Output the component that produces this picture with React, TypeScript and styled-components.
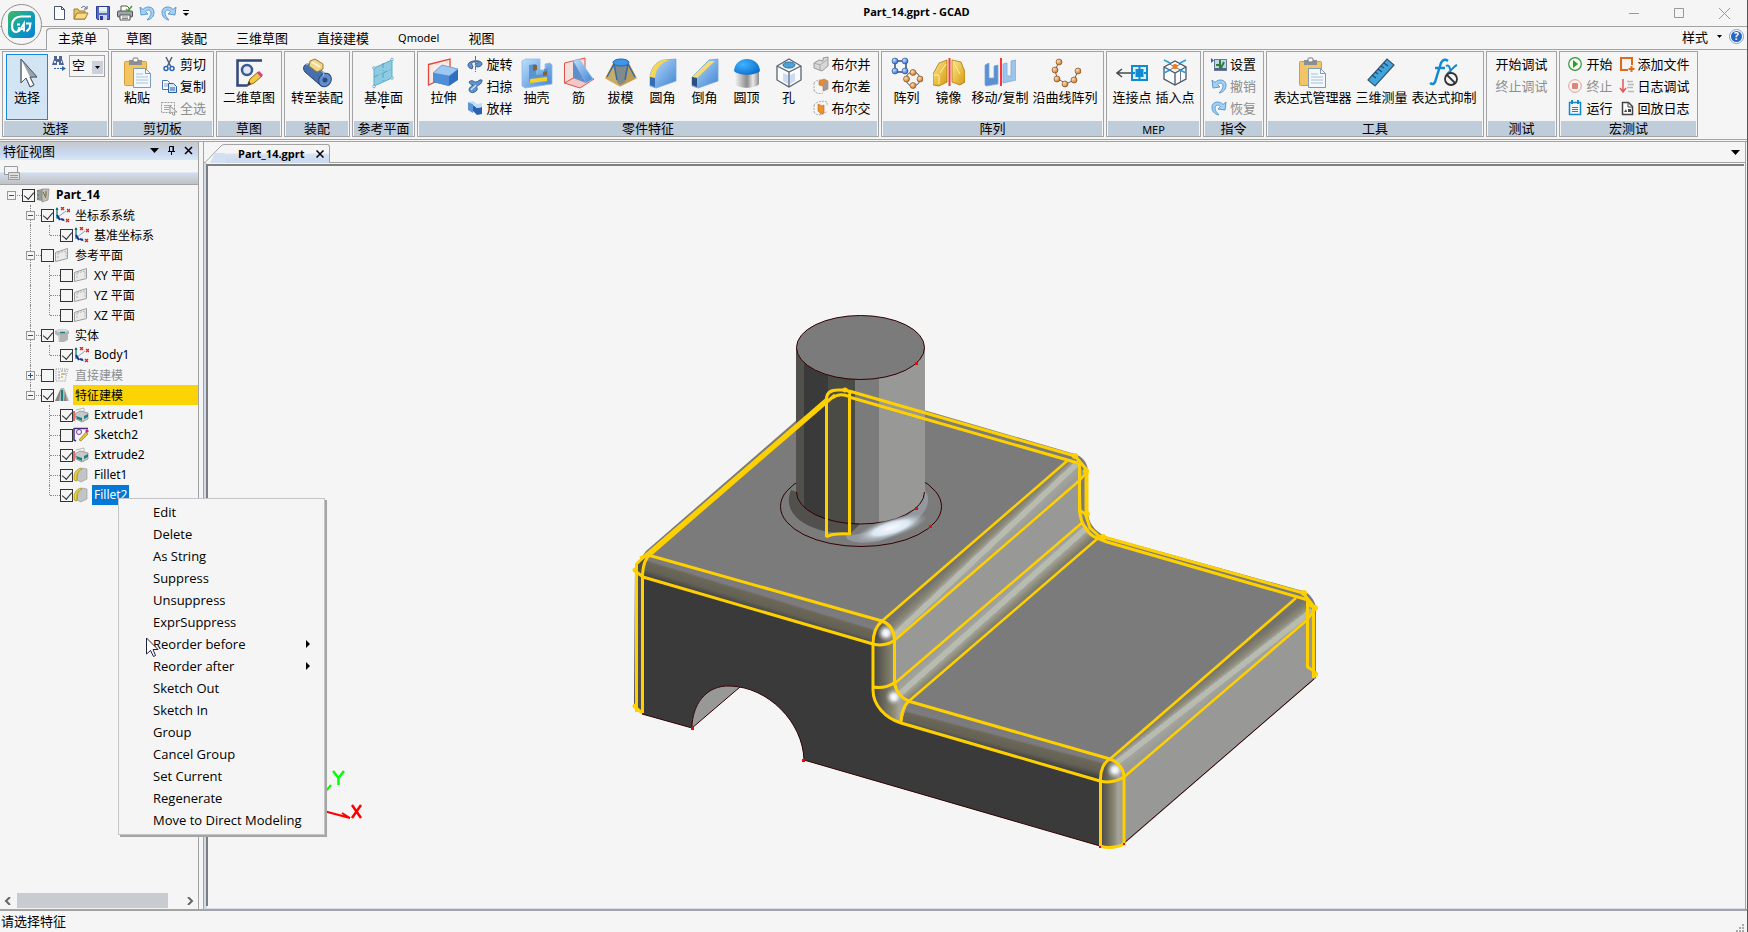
import React from "react";
import styled, { createGlobalStyle, css } from "styled-components";

const LINE = "#a3a3a3";
const BG = "#f5f5f5";
const BAND = "#bfccda";

const GlobalStyle = createGlobalStyle`
  * { box-sizing: border-box; }
  body {
    margin: 0;
    background: ${BG};
    color: #000;
    font-family: "Noto Sans", "Noto Sans CJK SC", sans-serif;
    font-size: 12px;
  }
  button, select, input { font: inherit; color: inherit; margin: 0; padding: 0; }
  button { background: none; border: 0; cursor: default; }
  ul { list-style: none; margin: 0; padding: 0; }
  h2 { font: inherit; margin: 0; }
`;

/* ---------- frame ---------- */

const Frame = styled.div`
  position: relative;
  display: flex;
  flex-direction: column;
  min-height: 100vh;
  border-right: 1px solid #555;
  overflow: hidden;
`;

const TitleBar = styled.header`
  display: grid;
  grid-template-columns: 1fr auto 1fr;
  align-items: center;
  height: 27px;
  border-bottom: 1px solid ${LINE};
`;

const QuickBar = styled.div`
  display: flex;
  align-items: center;
  gap: 6px;
  padding-left: 51px;
`;

const IconButton = styled.button`
  display: flex;
  align-items: center;
  justify-content: center;
`;

const WindowTitle = styled.div`
  font-family: "Open Sans", sans-serif;
  font-weight: 700;
  font-size: 11px;
  line-height: 24px;
  padding: 0 0 2px 86px;
`;

const WindowButtons = styled.div`
  display: flex;
  justify-content: flex-end;
  gap: 34px;
  padding-right: 17px;
  color: #999;
`;

const AppButton = styled.button`
  position: absolute;
  left: 1px;
  top: 4px;
  width: 41px;
  height: 41px;
  border: 1px solid #8f8f8f;
  border-radius: 50%;
  background: ${BG};
  display: flex;
  align-items: center;
  justify-content: center;
  z-index: 2;
`;

const TabRow = styled.nav`
  display: flex;
  align-items: flex-end;
  gap: 5px;
  height: 23px;
  padding: 0 3px 0 46px;
  border-bottom: 1px solid ${LINE};
`;

const RibbonTab = styled.button<{ $active?: boolean; $latin?: boolean }>`
  height: 21px;
  padding: 0 12px;
  font-size: ${(p) => (p.$latin ? 11 : 13)}px;
  line-height: ${(p) => (p.$latin ? 18 : 16)}px;
  padding-bottom: 2px;
  ${(p) =>
    p.$active &&
    css`
      border-radius: 4px 4px 0 0;
      background: ${BG};
      height: 22px;
      line-height: 18px;
      margin-bottom: -1px;
      box-shadow: inset 1px 1px ${LINE}, inset -1px 0 ${LINE};
    `}
`;

const StyleTools = styled.div`
  display: flex;
  align-items: center;
  gap: 7px;
  margin-left: auto;
  height: 22px;
  padding-bottom: 3px;
  font-size: 13px;
  line-height: 16px;
`;

const StyleButton = styled.button`
  display: flex;
  align-items: center;
  gap: 9px;
`;

/* ---------- ribbon ---------- */

const RibbonBar = styled.div`
  display: flex;
  gap: 2px;
  padding: 1px 2px 2px;
  height: 90px;
  border-bottom: 1px solid ${LINE};
`;

const Group = styled.section<{ $w: number }>`
  display: flex;
  flex-direction: column;
  flex: none;
  width: ${(p) => p.$w}px;
  border: 1px solid ${LINE};
  padding: 0 1px;
`;

const GroupBody = styled.div`
  flex: 1;
  display: flex;
  justify-content: center;
  padding-top: 2px;
`;

const GroupName = styled.h2<{ $latin?: boolean }>`
  height: 15px;
  background: ${BAND};
  text-align: center;
  font-size: ${(p) => (p.$latin ? 11 : 13)}px;
  line-height: ${(p) => (p.$latin ? 17 : 15)}px;
`;

const BigButton = styled.button<{ $on?: boolean }>`
  display: flex;
  flex-direction: column;
  align-items: center;
  min-width: 42px;
  height: 66px;
  padding: 2px ${(p) => (p.$on ? 1 : 2)}px 0;
  border: ${(p) => (p.$on ? "1px solid #1b86dc" : "0")};
  border-top-width: 1px;
  border-top-style: solid;
  border-top-color: ${(p) => (p.$on ? "#1b86dc" : "transparent")};
  background: ${(p) => (p.$on ? "#d3e5f5" : "none")};
  font-size: 13px;
  line-height: 17px;
  white-space: nowrap;
`;

const SmallColumn = styled.div`
  display: flex;
  flex-direction: column;
  padding: 0 3px;
`;

const SmallButton = styled.button`
  display: flex;
  align-items: center;
  gap: 3px;
  height: 22px;
  padding-bottom: 2px;
  font-size: 13px;
  line-height: 18px;
  white-space: nowrap;
  &:disabled { color: #8e8e8e; }
`;

const SelectTools = styled.div`
  display: flex;
  gap: 2px;
  padding: 1px 0 0 3px;
`;

const FilterBox = styled.div`
  position: relative;
  width: 36px;
  height: 22px;
`;

const FilterSelect = styled.select`
  appearance: none;
  width: 100%;
  height: 100%;
  border: 1px solid ${LINE};
  border-radius: 0;
  background: ${BG};
  padding: 0 2px 2px;
  font-size: 13px;
`;

const FilterArrow = styled.span`
  position: absolute;
  right: 2px;
  top: 6px;
  width: 11px;
  height: 13px;
  background: #cbd0da;
  display: flex;
  align-items: center;
  justify-content: center;
  pointer-events: none;
`;

/* ---------- workspace ---------- */

const Workspace = styled.div`
  display: flex;
  flex: 1;
  gap: 4px;
  margin-top: 1px;
  border-top: 1px solid ${LINE};
  border-bottom: 2px solid ${LINE};
`;

const Panel = styled.aside`
  display: flex;
  flex-direction: column;
  flex: none;
  width: 199px;
  border-right: 1px solid ${LINE};
`;

const PanelHeader = styled.div`
  display: flex;
  align-items: center;
  height: 18px;
  padding: 0 5px 1px 3px;
  background: linear-gradient(#c6c9cd, #c9d7ef 60%, #d8e7f6);
  font-size: 13px;
  line-height: 16px;
`;

const PanelTools = styled.div`
  display: flex;
  align-items: center;
  gap: 8px;
  margin-left: auto;
`;

const PanelToolbar = styled.div`
  height: 25px;
  padding: 6px 4px 0;
  border-bottom: 1px solid ${LINE};
  background: linear-gradient(${BG} 12px, #cfdef2 13px, #c9cbcf 20px, #b9c2d0);
`;

const Tree = styled.ul`
  flex: 1;
`;

const TreeRow = styled.li`
  display: flex;
  align-items: center;
  height: 20px;
  padding-left: 7px;
`;

const Indent = styled.span<{ $line?: boolean }>`
  flex: none;
  width: 15px;
  height: 20px;
  margin-left: 4px;
  border-left: 1px dotted ${(p) => (p.$line ? "#888" : "transparent")};
  &:first-child { margin-left: 0; width: 19px; }
`;

const Branch = styled.span<{ $v: "none" | "half" | "full" }>`
  position: relative;
  flex: none;
  width: 15px;
  height: 20px;
  display: flex;
  align-items: center;
  &::before {
    content: "";
    position: absolute;
    left: 4px;
    top: 0;
    height: ${(p) => (p.$v === "none" ? 0 : p.$v === "half" ? 10 : 20)}px;
    border-left: 1px dotted #888;
  }
  &::after {
    content: "";
    position: absolute;
    left: 5px;
    right: 0;
    top: 10px;
    border-top: 1px dotted #888;
  }
`;

const Expander = styled.button`
  position: relative;
  z-index: 1;
  width: 9px;
  height: 9px;
  background: ${BG};
  border: 1px solid #999;
  display: flex;
`;

const CheckBox = styled.input`
  appearance: none;
  flex: none;
  width: 13px;
  height: 13px;
  border: 1px solid #333;
  background: ${BG};
  position: relative;
  &:checked::after {
    content: "";
    position: absolute;
    left: 3px;
    top: 0;
    width: 5px;
    height: 8px;
    border: solid #333;
    border-width: 0 1px 1px 0;
    transform: rotate(40deg);
  }
`;

const NodeLabel = styled.label<{ $tone?: string }>`
  display: flex;
  align-items: center;
  height: 20px;
  margin-left: 3px;
  padding: 0 2px 1px;
  white-space: nowrap;
  ${(p) => p.$tone === "root" && css`font-weight: 700;`}
  ${(p) => p.$tone === "muted" && css`color: #8e8e8e;`}
  ${(p) => p.$tone === "current" && css`background: #fcd305; flex: 1;`}
  ${(p) => p.$tone === "selected" && css`background: #0078d7; color: #fff;`}
`;

const ScrollTrack = styled.div`
  display: flex;
  align-items: center;
  height: 15px;
  margin-bottom: 1px;
  padding: 0 4px;
  gap: 6px;
`;

const ScrollThumb = styled.div`
  flex: none;
  width: 151px;
  height: 15px;
  margin-right: auto;
  background: #c8cbcf;
`;

const Document = styled.main`
  display: flex;
  flex-direction: column;
  flex: 1;
  border-left: 1px solid ${LINE};
  border-right: 1px solid ${LINE};
  margin-right: 1px;
`;

const DocTabs = styled.div`
  display: flex;
  align-items: flex-end;
  height: 21px;
  padding: 0 5px 0 1px;
  border-bottom: 1px solid ${LINE};
`;

const DocTab = styled.div`
  display: flex;
  align-items: flex-end;
  margin-bottom: -1px;
`;

const DocTabFace = styled.div`
  display: flex;
  align-items: center;
  gap: 11px;
  height: 19px;
  padding: 0 5px 1px 13px;
  border: 1px solid ${LINE};
  border-width: 1px 1px 0 0;
  border-radius: 0 3px 0 0;
  background: linear-gradient(${BG} 45%, #d6e3f4 50%, #cbd8ee);
  font-family: "Open Sans", sans-serif;
  font-weight: 700;
  font-size: 11px;
  line-height: 16px;
`;

const DocTabEdge = styled.svg`
  display: block;
  width: 20px;
  height: 19px;
`;

const DocMenu = styled.button`
  margin-left: auto;
  align-self: center;
  display: flex;
`;

const CanvasFrame = styled.div`
  flex: 1;
  display: flex;
  padding: 1px 1px 2px 2px;
  background: linear-gradient(90deg, #cfdcee 0 3px, ${BG} 3px);
  border-bottom: 1px solid #d3e0ee;
`;

const Canvas = styled.div`
  position: relative;
  flex: 1;
  display: flex;
  justify-content: center;
  align-items: flex-start;
  padding-top: 144px;
  background: ${BG};
  border-left: 2px solid #7d7d7d;
  border-top: 2px solid #7d817d;
`;

const Triad = styled.svg`
  position: absolute;
  left: 104px;
  bottom: 84px;
`;

const StatusBar = styled.footer`
  display: flex;
  justify-content: space-between;
  align-items: flex-end;
  height: 21px;
  padding: 0 3px 0 1px;
  font-size: 13px;
  line-height: 21px;
`;

const Grip = styled.svg`
  display: block;
`;

/* ---------- context menu ---------- */

const ContextMenu = styled.div`
  position: absolute;
  left: 118px;
  top: 498px;
  width: 207px;
  display: flex;
  flex-direction: column;
  padding: 2px 0 3px;
  background: ${BG};
  border: 1px solid #c3c5c8;
  box-shadow: 2px 2px #a5a5a3;
  font-family: "Open Sans", sans-serif;
  font-size: 13px;
  z-index: 3;
`;

const MenuItem = styled.button`
  display: flex;
  align-items: center;
  justify-content: space-between;
  height: 22px;
  padding: 0 14px 0 34px;
  line-height: 20px;
  text-align: left;
`;

const Pointer = styled.svg`
  position: absolute;
  left: 146px;
  top: 637px;
  z-index: 4;
`;

/* ---------- icons ---------- */

type IconProps = { s?: number; children: React.ReactNode };
const Ico = ({ s = 16, children }: IconProps) => (
  <svg width={s} height={s} viewBox={`0 0 ${s} ${s}`} fill="none" aria-hidden="true">
    {children}
  </svg>
);

const Tri = ({ w = 5 }: { w?: number }) => (
  <svg width={w} height={Math.ceil(w / 2)} viewBox={`0 0 ${w} ${Math.ceil(w / 2)}`} aria-hidden="true">
    <path d={`M0 0H${w}L${w / 2} ${Math.ceil(w / 2)}Z`} fill="#000" />
  </svg>
);

const HiddenDefs = styled.svg`
  position: absolute;
`;

const Defs = () => (
  <HiddenDefs width="0" height="0" aria-hidden="true">
    <defs>
      <linearGradient id="blue" x1="0" y1="0" x2="1" y2="1">
        <stop offset="0" stopColor="#bfe0fb" />
        <stop offset="1" stopColor="#3f83d3" />
      </linearGradient>
      <linearGradient id="gold" x1="0" y1="0" x2="1" y2="1">
        <stop offset="0" stopColor="#ffe98a" />
        <stop offset="1" stopColor="#d8980f" />
      </linearGradient>
      <linearGradient id="steel" x1="0" y1="0" x2="1" y2="0">
        <stop offset="0" stopColor="#f4f4f4" />
        <stop offset=".5" stopColor="#8b8b8b" />
        <stop offset=".75" stopColor="#e9e9e9" />
        <stop offset="1" stopColor="#8b8b8b" />
      </linearGradient>
      <linearGradient id="logo" x1="0" y1="0" x2="1" y2="1">
        <stop offset="0" stopColor="#3fb85f" />
        <stop offset=".5" stopColor="#0fa0b4" />
        <stop offset="1" stopColor="#0a7ed6" />
      </linearGradient>
      <radialGradient id="dome" cx=".35" cy=".35" r=".8">
        <stop offset="0" stopColor="#3fb4ff" />
        <stop offset="1" stopColor="#0767c9" />
      </radialGradient>
      <radialGradient id="orangeBall" cx=".35" cy=".35" r=".7">
        <stop offset="0" stopColor="#ffe0bd" />
        <stop offset="1" stopColor="#c8731f" />
      </radialGradient>
      <radialGradient id="blueBall" cx=".35" cy=".35" r=".7">
        <stop offset="0" stopColor="#cfe6ff" />
        <stop offset="1" stopColor="#1f63c8" />
      </radialGradient>
    </defs>
  </HiddenDefs>
);

const Logo = () => (
  <svg width="27" height="27" viewBox="0 0 27 27" fill="none" aria-hidden="true">
    <rect width="27" height="27" rx="5" fill="url(#logo)" />
    <path d="M23 5.500H13C8 5.500 4 9 4 14c0 4 1 7 4 7 2 0 3-2 3-5" stroke="#fff" strokeWidth="2.200" />
    <path d="M9 13.500h3M11 20.500l5-8v8M13 18h3" stroke="#fff" strokeWidth="1.800" />
    <path d="M18 12.500h4.500l-1 5-3 3" stroke="#fff" strokeWidth="2" />
  </svg>
);

const NewFile = () => (
  <Ico><path d="M3.500 1.500h7l3 3v10h-10z" fill="#fbfdff" stroke="#47536d" /><path d="M10.500 1.500v3h3" stroke="#47536d" /><path d="M4 14.500h9.500" stroke="#2f6fb8" /></Ico>
);
const OpenFile = () => (
  <Ico><path d="M1 14V4h4l1 2h6v8z" fill="#e9c46a" stroke="#a07b28" /><path d="M1 14l3-6h11l-3 6z" fill="#f8dc8a" stroke="#a07b28" /><path d="M8 3c2-2 4-2 5 0m1-2v3h-3" stroke="#4f5d7c" /></Ico>
);
const SaveFile = () => (
  <Ico><path d="M1.500 1.500h13v13h-12l-1-1z" fill="#5868c4" stroke="#2d3c92" /><rect x="4" y="2" width="8" height="6" fill="#eaf2fb" /><path d="M4 7h8" stroke="#9cc" /><rect x="4" y="10" width="8" height="5" fill="#cdd6e8" /><rect x="5" y="11" width="3" height="4" fill="#2d3c92" /></Ico>
);
const PrintFile = () => (
  <Ico><path d="M4 6V1h6l2 2v3" fill="#fff" stroke="#555" /><rect x=".5" y="6" width="15" height="6" rx="1" fill="#9fa5a8" stroke="#4f5558" /><path d="M3 10h10v5H3z" fill="#fff" stroke="#555" /><path d="M5 12h6M5 13.500h6" stroke="#888" /><path d="M9 4l2 2 4-5" stroke="#3da52c" strokeWidth="1.500" /></Ico>
);
const UndoArrow = () => (
  <Ico><path d="M1 2l1 8 7-1-2.500-2.500C9 4 12 5 12 8c0 2-1 4-4 7 5-1 7-4 7-8C15 2 8 0 4 4.500z" fill="#a5d0f2" stroke="#5b9ad4" /></Ico>
);
const RedoArrow = () => (
  <Ico><path d="M15 2l-1 8-7-1 2.500-2.500C7 4 4 5 4 8c0 2 1 4 4 7-5-1-7-4-7-8C1 2 8 0 12 4.500z" fill="#a5d0f2" stroke="#5b9ad4" /></Ico>
);

const ArrowBig = () => (
  <Ico s={32}><path d="M10 2v24l5-5 4 9 4-2-4-8h7z" fill="#fff" stroke="#6a7a8c" /><path d="M10 2l16 18h-7z" fill="#9ba4ad" /><path d="M10 2l16 18h-7l4 8-4 2-4-9-5 5z" stroke="#555f69" /></Ico>
);
const FindIcon = () => (
  <Ico><path d="M3 1h3v3h2V1h3v3l2 6H8V7H6v3H1l2-6z" fill="#4d6595" /><path d="M3 7h2M10 7h1" stroke="#dfe8f8" strokeWidth="2" /><path d="M3 13.500h9" stroke="#2f62b5" strokeDasharray="2 1" /><path d="M11 11l4 2.500-4 2.500z" fill="#2f62b5" /></Ico>
);
const ClipIcon = () => (
  <Ico s={32}><rect x="3.500" y="4.500" width="22" height="24" rx="1" fill="#f2c464" stroke="#d39f3d" /><rect x="8" y="3" width="13" height="5" fill="#8b9094" /><rect x="12" y="1" width="5" height="4" rx="1" fill="#fff" stroke="#777" /><path d="M12.500 11.500h12l5 5v14h-17z" fill="#f3f8fd" stroke="#7f9ab5" /><path d="M24.500 11.500v5h5" stroke="#7f9ab5" /><path d="M15 17h7M15 20h12M15 23h12M15 26h12" stroke="#a9c0d8" /></Ico>
);
const CutIcon = () => (
  <Ico><path d="M5 1l5 10M11 1L6 11" stroke="#555f70" strokeWidth="1.500" /><circle cx="5" cy="12.500" r="2" stroke="#2c68b8" strokeWidth="1.500" /><circle cx="11" cy="12.500" r="2" stroke="#2c68b8" strokeWidth="1.500" /></Ico>
);
const CopyIcon = () => (
  <Ico><path d="M1.500 2.500h5l2 2v7h-7z" fill="#fff" stroke="#4a76b0" /><path d="M3 6h4M3 8h4" stroke="#7fa3d0" /><path d="M7.500 5.500h5l3 3v6h-8z" fill="#dbe8f8" stroke="#2b5ca5" /><path d="M9 10h5M9 12h5" stroke="#2b5ca5" /></Ico>
);
const SelectAllIcon = () => (
  <Ico><rect x=".5" y="2.500" width="13" height="10" stroke="#999" strokeDasharray="2 1" /><path d="M3 5.500h8M3 7.500h6M3 9.500h5" stroke="#aaa" /><path d="M9 6v8l2-2 1 3h2l-1-3h3z" fill="#eee" stroke="#999" /></Ico>
);
const SketchBig = () => (
  <Ico s={32}><path d="M29 3.500H4.500v25h10" stroke="#2f4779" strokeWidth="2.500" /><circle cx="14" cy="13" r="5" stroke="#3a5a96" strokeWidth="2.500" fill="#dfe9f7" /><path d="M14 29l3-7 8-7 4 4-8 7z" fill="#f3c847" stroke="#8f6a14" /><path d="M14 29l2-5 2 3z" fill="#433" /><path d="M24 16l2-2 4 4-2 2z" fill="#d9388b" /></Ico>
);
const AssemblyBig = () => (
  <Ico s={32}><path d="M7 7c-4 0-6 4-3 8l15 13c5 3 11-2 9-8L14 8z" fill="#466fae" stroke="#29456f" /><ellipse cx="24" cy="23" rx="6" ry="7" transform="rotate(35 24 23)" fill="#5f8fcc" stroke="#29456f" /><circle cx="24" cy="23" r="2.500" fill="#2e4a7d" /><path d="M5 8l4-2 14 10-1 3" stroke="#a8c6e8" /><path d="M9 4l5-2 8 5v5l-6 3-8-6z" fill="#f0d68b" stroke="#9b7a29" /><path d="M11 5l8 5" stroke="#fff6d2" strokeWidth="2" /></Ico>
);
const PlaneBig = () => (
  <Ico s={32}><path d="M7 11L25 3v18L7 29z" fill="#8ccbe2" stroke="#5fa9cb" /><path d="M16 6v20M7 20l18-8" stroke="#5a9dbd" strokeDasharray="5 2 1 2" /><g fill="#fff" stroke="#5a9dbd" strokeWidth=".8"><circle cx="7" cy="11" r="1.300" /><circle cx="25" cy="2.500" r="1.300" /><circle cx="25" cy="21" r="1.300" /><circle cx="7" cy="29.500" r="1.300" /></g></Ico>
);
const ExtrudeBig = () => (
  <Ico s={32}><path d="M1.500 7.500L23 2v16L1.500 28z" fill="#fde9e6" stroke="#e5473a" strokeWidth="1.300" /><path d="M6 16l9-8 16 4v11l-9 6-16-4z" fill="#2f6fc0" /><path d="M6 16l9-8 16 4-9 7z" fill="#9dc8f2" stroke="#6c9fd8" strokeWidth=".8" /><path d="M6 16l16 3v10L6 25z" fill="#4f8fd8" /></Ico>
);
const RevolveIcon = () => (
  <Ico><path d="M1 9c0-5 14-6 14-1 0 2-3 3-5 3l-2-3c3-1 4-1 3-2H6c-2 1-1 3 0 4l-1 3C2 12 1 11 1 9z" fill="#5d93ce" stroke="#274d80" strokeWidth=".8" /><path d="M8.500 0v16" stroke="#f33" strokeDasharray="4 1" /></Ico>
);
const SweepIcon = () => (
  <Ico><path d="M2 4c3-3 5 0 7 0s3-3 6-2c0 4-3 5-5 6-1 1 1 2 0 4-2 3-7 4-8 0 0-3 3-4 4-5C4 7 3 6 2 4z" fill="#5d93ce" stroke="#274d80" strokeWidth=".8" /><path d="M4 12c1-2 4-3 5-5" stroke="#cfe6fb" strokeWidth="1.500" /></Ico>
);
const LoftIcon = () => (
  <Ico><path d="M1 2l5 2v9L1 10z" fill="#5c95d8" /><path d="M6 5l4 3 5-1v7l-5 1-4-4z" fill="#2b62ad" /><path d="M1 2l5-1 4 3 5-1v4l-5 1-4-4z" fill="#bcdcf7" /></Ico>
);
const ShellBig = () => (
  <Ico s={32}><path d="M1 4l4-2h14v11h5V7l5-1 2 2v19L4 31l-3-2z" fill="url(#blue)" stroke="#8ebbe8" strokeWidth=".8" /><path d="M8 8l7-1v11l8-1v-5l4-1v12L8 25z" fill="#5b94d3" /><path d="M12 8h4v5l-4 1zM22 15l4-1v4l-4 1z" fill="#80672e" /><path d="M9 22l17-2v4L9 26z" fill="#f6cf2a" /></Ico>
);
const RibBig = () => (
  <Ico s={32}><path d="M1.500 6L22 1v19L1.500 26z" fill="#f4dfdc" stroke="#e0524a" /><path d="M1.500 26L14 19l17 3-14 9z" fill="#f3c8c4" stroke="#e0524a" /><path d="M10 4l6-2 14 20-7 4z" fill="url(#blue)" stroke="#8ebbe8" strokeWidth=".8" /><path d="M10 4v17l13 5z" fill="#5f8fc8" /></Ico>
);
const DraftBig = () => (
  <Ico s={32}><path d="M9 6L1 21l14 8 16-8-8-15z" fill="#7f8c8b" stroke="#e8a140" strokeWidth="1.500" /><path d="M9 6l3 19 3 4L1 21z" fill="#c5ae6a" /><path d="M23 6l-3 19-5 4 16-8z" fill="#b89d5b" /><ellipse cx="16" cy="5.500" rx="8" ry="3.500" fill="#3d97e8" stroke="#2763a8" /><path d="M9 7l3 16M23 7l-3 16M9 7L2 20M23 7l7 13" stroke="#3768a8" strokeWidth="1.500" /></Ico>
);
const FilletBig = () => (
  <Ico s={32}><path d="M3 20C4 10 10 4 17 3l12-1v22L9 31l-6-2z" fill="url(#blue)" stroke="#74a5dc" strokeWidth=".8" /><path d="M3 20C4 10 10 4 17 3l6 0C14 5 9 11 8 21z" fill="#f6d655" /><path d="M3 20l5 1v9l-5-2z" fill="#356cb3" /></Ico>
);
const ChamferBig = () => (
  <Ico s={32}><path d="M3 20L20 3l9-1v22L9 31l-6-2z" fill="url(#blue)" stroke="#74a5dc" strokeWidth=".8" /><path d="M3 20L20 4h6L8 21z" fill="#f3dc78" /><path d="M3 20l5 1v9l-5-2z" fill="#2c4f83" /></Ico>
);
const DomeBig = () => (
  <Ico s={32}><path d="M4 14h24v13c-4 5-20 5-24 0z" fill="url(#steel)" /><path d="M3 14C4-2 28-2 29 14c-5 5-21 5-26 0z" fill="url(#dome)" /></Ico>
);
const HoleBig = () => (
  <Ico s={32}><path d="M4 9l12-7 12 7v14l-12 7-12-7zM4 9l12 6 12-6M16 15v15" fill="#fafbfd" stroke="#5a6473" strokeWidth="1.300" /><ellipse cx="16" cy="8" rx="6" ry="3" fill="#4aa3d8" stroke="#2f6fa0" /><path d="M10 16v8l5 3V18zM17 18l5-2v8l-5 3z" fill="#cbdcf3" /></Ico>
);
const UniteIcon = () => (
  <Ico><path d="M1 7l5-3 4 1V2l5-1v9l-6 5-8-3z" fill="#d7d7d7" stroke="#999" /><path d="M1 7l6 2 8-6M7 9v6" stroke="#aaa" /></Ico>
);
const SubtractIcon = () => (
  <Ico><path d="M1 5c2-3 8-4 9-2M1 12c1 4 7 4 9 3M1 5v7" stroke="#aaa" strokeDasharray="2 1" /><path d="M6 3l5-2 4 2v8l-5 2V8L6 7z" fill="#e98a2b" stroke="#b8743a" strokeWidth=".6" /><path d="M11 5l4-2v8l-4 2z" fill="#9a9a9a" /></Ico>
);
const IntersectIcon = () => (
  <Ico><path d="M1 5c2-3 8-5 13-3v4M1 12c2 4 9 4 13-1M1 5v7" stroke="#aaa" strokeDasharray="2 1" /><path d="M5 4l4 2 2-1v8l-3 1-3-3z" fill="#f0902c" stroke="#b8661d" strokeWidth=".6" /></Ico>
);
const ArrayBig = () => (
  <Ico s={32}><path d="M4 4h11v11H4z" stroke="#3a4d78" strokeWidth="1.500" /><g fill="url(#blueBall)" stroke="#2a519c" strokeWidth=".6"><circle cx="4" cy="4" r="3" /><circle cx="14" cy="4" r="3" /><circle cx="4" cy="14" r="3" /><circle cx="14" cy="14" r="3" /></g><circle cx="22" cy="22" r="7" stroke="#555" /><g fill="url(#orangeBall)" stroke="#7a4514" strokeWidth=".6"><circle cx="22" cy="15.500" r="3" /><circle cx="15.500" cy="22" r="3" /><circle cx="29" cy="22" r="3" /><circle cx="22" cy="28.500" r="3" /></g></Ico>
);
const MirrorBig = () => (
  <Ico s={32}><path d="M0 17L6 6l8-3v22l-8 4-6-1z" fill="url(#gold)" stroke="#a67910" strokeWidth=".8" /><path d="M32 15L28 5l-9-2v22l8 3 5-3z" fill="url(#gold)" stroke="#a67910" strokeWidth=".8" /><path d="M1 18h5v9M7 16l6-9M22 8l5 9" stroke="#fff1a0" /><path d="M16.500 1v28" stroke="#f33" strokeWidth="2" /></Ico>
);
const MoveCopyBig = () => (
  <Ico s={32}><path d="M1 8l4-2v15h5V9l4-1v19L2 29l-1-1z" fill="#5b90d0" stroke="#7ea8dc" strokeWidth=".8" /><path d="M32 3l-5 1v15h-4V6l-4 1v19l13-3z" fill="#9cc5ee" stroke="#7ea8dc" strokeWidth=".8" /><path d="M17 1v28" stroke="#f33" strokeWidth="2" /></Ico>
);
const CurveArrayBig = () => (
  <Ico s={32}><path d="M10 5L6 13l2 8 9 6 8-4 4-9" stroke="#666" /><g fill="url(#orangeBall)" stroke="#7a4514" strokeWidth=".6"><circle cx="10" cy="5" r="3" /><circle cx="6" cy="13" r="3" /><circle cx="8" cy="22" r="3" /><circle cx="16" cy="27" r="3" /><circle cx="25" cy="23" r="3" /><circle cx="29" cy="14" r="3" /></g></Ico>
);
const ConnectBig = () => (
  <Ico s={32}><path d="M15 16H1m5-4l-5 4 5 4" stroke="#444c57" strokeWidth="1.500" /><rect x="16" y="9" width="15" height="14" fill="#d8effc" stroke="#128ad0" strokeWidth="2" /><rect x="19.500" y="12" width="8" height="8" fill="#128ad0" /><path d="M23.500 9v3M23.500 20v3M16 16h3M28 16h3" stroke="#128ad0" strokeWidth="2" /></Ico>
);
const InsertBig = () => (
  <Ico s={32}><path d="M5 10l11-6 11 6v12l-11 6-11-6zM5 10l11 6 11-6M16 16v12" fill="#fafbfd" stroke="#4d5766" strokeWidth="1.300" /><path d="M10.500 7l11 6v12M21.500 7l-11 6" stroke="#4d5766" strokeWidth=".8" /><path d="M5 3l6 3M27 3l-6 3M5 16l6-3M27 16l-6-3" stroke="#26a0e0" strokeWidth="1.600" /><circle cx="16" cy="9.500" r="2.500" fill="#f07a16" /></Ico>
);
const SettingsIcon = () => (
  <Ico><path d="M0 2l3 2.500L0 7z" fill="#2b62b5" /><rect x="3.500" y="3.500" width="12" height="11" fill="#c5d5ec" stroke="#6478a0" /><path d="M9 4v9M5 9h3l2 3 3-6" stroke="#287f38" strokeWidth="2" /><path d="M4 12h11v2H4z" fill="#58647a" /></Ico>
);
const RulerBig = () => (
  <Ico s={32}><path d="M3 23L22 2l7 6L10 29z" fill="#42a4dc" stroke="#36566f" strokeWidth="1.200" /><path d="M7 18l4 3M10 15l3 2M13 12l4 3M16 9l3 2M19 6l4 3" stroke="#234b68" strokeWidth="1.200" /></Ico>
);
const FxBig = () => (
  <Ico s={32}><path d="M20 4c-4-3-7 0-8 5L8 22c-1 5-3 6-6 4M7 11h10" stroke="#128ad0" strokeWidth="2.500" /><path d="M18 9c4-2 4 3 5 8M29 8c-3 1-6 6-10 9" stroke="#128ad0" strokeWidth="2" /><circle cx="23" cy="22" r="6" fill={BG} stroke="#333" strokeWidth="1.800" /><path d="M19 18l8 8" stroke="#333" strokeWidth="1.800" /></Ico>
);
const PlayIcon = () => (
  <Ico><circle cx="8" cy="8" r="6.300" stroke="#2e9c2e" strokeWidth="1.200" /><path d="M6 4l5 4-5 4z" fill="#2e9c2e" /></Ico>
);
const StopIcon = () => (
  <Ico><circle cx="8" cy="8" r="6.300" stroke="#e59a92" /><rect x="5" y="5" width="6" height="6" rx="1" fill="#e0837a" /></Ico>
);
const RunIcon = () => (
  <Ico><rect x="2.500" y="2.500" width="11" height="12" stroke="#128ad0" strokeWidth="1.500" /><path d="M5 0v4M11 0v4" stroke="#128ad0" strokeWidth="2" /><path d="M5 7.500h6M5 9.500h6M5 11.500h6" stroke="#128ad0" /></Ico>
);
const AddFileIcon = () => (
  <Ico><path d="M9 14H2V2h11v7" stroke="#e06a17" strokeWidth="2" /><path d="M12.500 10v6M9.500 13h6" stroke="#e06a17" strokeWidth="2" /></Ico>
);
const LogIcon = () => (
  <Ico><path d="M4 1v12M1 10l3 4 3-4" stroke="#e8555a" strokeWidth="1.500" /><path d="M8 3.500h6M9 6.500h6M8 9.500h6M9 13.500h6" stroke="#bbb" strokeWidth="1.500" /></Ico>
);
const ReplayIcon = () => (
  <Ico><path d="M3.500 2.500h6l4 4v8h-10z" fill="#fff" stroke="#444" strokeWidth="1.500" /><path d="M9 2v5h4" stroke="#444" /><path d="M5 12l2-3 1 3zM9 12h3V9H9z" fill="#444" /></Ico>
);
const HelpIcon = () => (
  <svg width="15" height="15" viewBox="0 0 15 15" aria-hidden="true">
    <circle cx="7.500" cy="7.500" r="7" fill="#fff" stroke="#7ba3d4" />
    <circle cx="7.500" cy="7.500" r="5.500" fill="#2467c4" />
    <text x="7.500" y="11" textAnchor="middle" fontSize="10" fontWeight="700" fill="#fff">?</text>
  </svg>
);

/* tree icons */
const PartNode = () => (
  <Ico><path d="M2 3l5-1v12l-5-1z" fill="#9a9a9a" /><path d="M7 2l7 0-1 11-6 2z" fill="#c4c1b4" stroke="#777" strokeWidth=".6" /><path d="M3 3v10" stroke="#3a8a60" strokeDasharray="2 2" /><path d="M8 5l3 6M11 4v5" stroke="#6d6540" /></Ico>
);
const AxesNode = () => (
  <Ico><path d="M3 1v10h1" stroke="#1f9090" strokeWidth="1.500" /><path d="M1.500 3L3 0l1.500 3z" fill="#0f6a6a" /><path d="M4 10l8-6M4 11l7 3" stroke="#7fa8a8" /><path d="M3 8l3 5M7 12l3 1" stroke="#1a2fa0" strokeWidth="2" /><path d="M7 0l3 3m0-3L7 3M13 2l3 3m0-3l-3 3M12 12l3 3m0-3l-3 3" stroke="#d22" strokeWidth="1.300" /></Ico>
);
const PlaneNode = () => (
  <Ico><path d="M1.500 5.500l12-4v10l-12 3z" fill="#eaeaea" stroke="#9d9d9d" /><path d="M4 6v6M4 6l8-2v6" stroke="#b5b5b5" strokeDasharray="2 1" /></Ico>
);
const BodyNode = () => (
  <Ico><path d="M1 4l4-2h6l4 2v3h-1v6l-4 2H5l-1-6-3-2z" fill="#b3b3b3" /><path d="M2 4c3-3 10-3 12 0-3 2-9 2-12 0z" fill="#d8d8d8" /><path d="M6 5.500h5" stroke="#158080" strokeWidth="1.500" /><path d="M5 8v6" stroke="#e2e2e2" /></Ico>
);
const DirectNode = () => (
  <Ico><path d="M2 2h12l-3 12H2z" stroke="#b5b5b5" strokeWidth="1.500" strokeDasharray="1 1" /><path d="M5 4v8M8 3v9M11 3v6" stroke="#c2c2c2" strokeDasharray="2 1" strokeWidth="2" /><path d="M8 7h2" stroke="#d9c04a" strokeWidth="2" /></Ico>
);
const FeatureNode = () => (
  <Ico><path d="M7 1h3l5 13H1z" fill="#b5b5b5" /><path d="M7 1l-2 13H1zM11 4l2 10h-3z" fill="#868686" /><path d="M8 3v11" stroke="#158080" strokeWidth="2" /></Ico>
);
const ExtrudeNode = () => (
  <Ico><path d="M1 4v10" stroke="#e33" strokeWidth="1.500" /><path d="M3 3l8-2v5" stroke="#bbb" /><path d="M2 7l5-3 8 2v6l-6 3-6-3z" fill="#c9c9c9" stroke="#858585" strokeWidth=".7" /><path d="M3 9l6 2v3l-5-2zM11 9l4-2v3l-4 2z" fill="#158585" /></Ico>
);
const SketchNode = () => (
  <Ico><path d="M1 1.500h14M1 1v12l2 1" stroke="#3f2f80" strokeWidth="1.500" /><circle cx="6" cy="5" r="2.500" stroke="#7a2fa8" /><path d="M6 13l7-8 2 2-7 7z" fill="#e6c52a" stroke="#7a6a15" strokeWidth=".6" /><path d="M12 4l2-2 2 2-2 2z" fill="#c2288f" /></Ico>
);
const FilletNode = () => (
  <Ico><path d="M5 4l4-3 5 1v10l-6 3-4-2z" fill="#c2c4c6" stroke="#959595" strokeWidth=".6" /><path d="M1 10c0-5 3-8 7-9l1 1c-4 2-5 5-5 8v4l-3-1z" fill="#ecd02c" stroke="#8e8030" strokeWidth=".6" /></Ico>
);

/* ---------- 3D part ---------- */

const PartModel = () => (
  <svg width="692" height="542" viewBox="630 310 692 542" fill="none" role="img" aria-label="Part_14">
    <defs>
      <linearGradient id="cyl" x1="796" x2="925" y1="0" y2="0" gradientUnits="userSpaceOnUse">
        <stop offset="0" stopColor="#51504c" /><stop offset=".06" stopColor="#51504c" />
        <stop offset=".06" stopColor="#3a3a3a" /><stop offset=".25" stopColor="#3a3a3a" />
        <stop offset=".25" stopColor="#4b4b46" /><stop offset=".455" stopColor="#4b4b46" />
        <stop offset=".455" stopColor="#7b7b7b" /><stop offset=".645" stopColor="#7b7b7b" />
        <stop offset=".645" stopColor="#989896" /><stop offset="1" stopColor="#989896" />
      </linearGradient>
      <linearGradient id="frontRound" x1="765" y1="588" x2="758" y2="611" gradientUnits="userSpaceOnUse">
        <stop offset="0" stopColor="#7a7a78" /><stop offset=".3" stopColor="#7d7b80" />
        <stop offset=".4" stopColor="#6b6857" /><stop offset=".72" stopColor="#636056" />
        <stop offset="1" stopColor="#3f3f3e" />
      </linearGradient>
      <linearGradient id="frontRound2" x1="1005" y1="729" x2="999" y2="752" gradientUnits="userSpaceOnUse">
        <stop offset="0" stopColor="#7a7a78" /><stop offset=".3" stopColor="#7d7b80" />
        <stop offset=".4" stopColor="#6b6857" /><stop offset=".72" stopColor="#636056" />
        <stop offset="1" stopColor="#3f3f3e" />
      </linearGradient>
      <linearGradient id="edgeRound" x1="970" y1="546" x2="986" y2="563" gradientUnits="userSpaceOnUse">
        <stop offset="0" stopColor="#74726a" /><stop offset=".3" stopColor="#8b8979" />
        <stop offset=".45" stopColor="#a3a49c" /><stop offset=".46" stopColor="#b8bcb0" />
        <stop offset=".68" stopColor="#b8bcb0" /><stop offset=".7" stopColor="#a5a59f" />
        <stop offset="1" stopColor="#9a9a97" />
      </linearGradient>
      <linearGradient id="innerRound" x1="985" y1="605" x2="1001" y2="623" gradientUnits="userSpaceOnUse">
        <stop offset="0" stopColor="#9a9a97" /><stop offset=".28" stopColor="#a5a59f" />
        <stop offset=".3" stopColor="#b8bcb0" /><stop offset=".52" stopColor="#b8bcb0" />
        <stop offset=".53" stopColor="#a3a49c" /><stop offset=".75" stopColor="#8b8979" />
        <stop offset="1" stopColor="#74726a" />
      </linearGradient>
      <linearGradient id="lowRound" x1="1203" y1="679" x2="1217" y2="697" gradientUnits="userSpaceOnUse">
        <stop offset="0" stopColor="#74726a" /><stop offset=".3" stopColor="#8b8979" />
        <stop offset=".45" stopColor="#a3a49c" /><stop offset=".46" stopColor="#b8bcb0" />
        <stop offset=".68" stopColor="#b8bcb0" /><stop offset=".7" stopColor="#a5a59f" />
        <stop offset="1" stopColor="#9a9a97" />
      </linearGradient>
      <linearGradient id="postRound" x1="0" x2="1" y1="0" y2="0">
        <stop offset="0" stopColor="#454543" /><stop offset=".3" stopColor="#686659" />
        <stop offset=".6" stopColor="#8d8a75" /><stop offset=".75" stopColor="#a5a59f" />
        <stop offset="1" stopColor="#9a9a97" />
      </linearGradient>
      <radialGradient id="shine">
        <stop offset="0" stopColor="#fff" /><stop offset=".35" stopColor="#e3e9ee" />
        <stop offset="1" stopColor="#9a9990" stopOpacity="0" />
      </radialGradient>
      <radialGradient id="gloss">
        <stop offset="0" stopColor="#f8fbff" /><stop offset=".5" stopColor="#dbe7f2" />
        <stop offset="1" stopColor="#989ea4" stopOpacity="0" />
      </radialGradient>
    </defs>

    {/* silhouette behind the rounded back edges */}
    <path d="M636 565L646 551L829 392L838 388L852 389L1075 454C1083 457 1088 463 1088 472V515C1090 526 1098 534 1108 537L1303 591C1311 594 1316 602 1316 610V678L1124 844L1100 840L900 700L640 600Z" fill="#7b7b78" />
    {/* upper and lower steps */}
    <path d="M648 555L828 398L850 395L1068 460L882 621Z" fill="#7b7b7b" />
    <path d="M908 701L1097 539L1297 598L1110 759Z" fill="#7b7b7b" />
    {/* riser and side face */}
    <path d="M895 640L1080 480L1083 522L894 684Z" fill="#989896" />
    <path d="M1124 777L1313 614V679L1124 844Z" fill="#989896" />
    {/* front face with its arch */}
    <path d="M642 576L873 643V690C873 705 885 718 901 723L1100 781V846L804 760C803 722 768 687 730 686C705 685 692 706 692 728L642 714Z" fill="#3a3a3a" />
    <path d="M692 728C692 706 705 685 730 686L740 687Z" fill="#989896" />
    {/* left post */}
    <path d="M635 566L648 555L643 577V714L634 706Z" fill="#4d4c48" />
    {/* rounds */}
    <path d="M648 555L882 621L873 644L642 576Z" fill="url(#frontRound)" />
    <path d="M908 701L1110 759L1100 781L901 723Z" fill="url(#frontRound2)" />
    <path d="M882 621L1067 461L1078 464L1085 474L1080 481L895 640Z" fill="url(#edgeRound)" />
    <path d="M894 684L1083 522L1097 539L908 701C900 698 896 692 894 684Z" fill="url(#innerRound)" />
    <path d="M1110 759L1296 598L1308 602L1314 614L1124 777Z" fill="url(#lowRound)" />
    <path d="M873 644V690C873 705 885 718 901 723L908 701C900 698 896 692 894 683V640C893 630 888 624 882 621C876 626 873 634 873 644Z" fill="url(#postRound)" />
    <path d="M1100 846V781C1100 770 1104 762 1110 759C1118 762 1124 769 1124 777V844Q1112 850 1100 846Z" fill="url(#postRound)" />
    <circle cx="886" cy="633" r="9" fill="url(#shine)" />
    <circle cx="894" cy="697" r="9" fill="url(#shine)" />
    <circle cx="1115" cy="770" r="9" fill="url(#shine)" />

    {/* boss and its blend */}
    <ellipse cx="861" cy="506.500" rx="80.500" ry="40" fill="#7b7b7b" stroke="#300" />
    <path d="M791 490C781 514 806 533 850 534L860 524L797 492Z" fill="#51504c" />
    <path d="M925 490C936 505 918 527 880 541C858 545 846 541 846 536C890 530 920 515 925 490Z" fill="#92989e" />
    <path d="M796 348V492A64.500 32 0 0 0 925 492V348Z" fill="url(#cyl)" />
    <path d="M796.500 492A64 32 0 0 0 924.500 492" stroke="#300" />
    <ellipse cx="891" cy="528" rx="38" ry="10" transform="rotate(-17 891 528)" fill="url(#gloss)" />
    <ellipse cx="860.500" cy="347.500" rx="64" ry="32" fill="#7b7b7b" stroke="#300" />

    {/* boundary edges */}
    <path d="M642 714L692 728C692 706 705 685 730 686C768 687 803 722 804 760L1100 846M692 728L740 687M1124 843L1314 679" stroke="#300" />

    {/* highlighted edges */}
    <g stroke="#ffd000" strokeWidth="3" strokeLinejoin="round">
      <path d="M636.500 712V564L646 555L828 398M642.500 713V575C643 565 646 557 651 554L835 395" />
      <path d="M634 570L643 577L873 644M634 706L642 713M640 558L648 555L882 621" />
      <path d="M826.500 537V398C827 392 832 390 838 390H847L851 394M849.500 535V394M826 537Q832 533 850 534M832 398Q840 392 850 397" />
      <path d="M849 391L1075 456L1087 470V515M849 397L1078 463" />
      <path d="M1079.500 463V511C1081 524 1088 535 1097 538L1107 542L1308 600" />
      <path d="M1100 536L1303 593L1315 608L1307 604M1307.500 600V667L1314 671M1313.500 606V678" />
      <path d="M1086 470V516L1090 528L1100 537M1079 510L1087 515" />
      <path d="M882 621L1067 461M895 640L1080 480L1087 472M894 684L1083 522M909 701L1097 539" strokeWidth="2.500" />
      <path d="M1110 759L1296 598M1124 777L1307 620L1314 611" strokeWidth="2.500" />
      <path d="M873 644V690C873 705 885 718 901 723L1100 781M908 701L1110 759" />
      <path d="M873 644C873 634 876 626 882 621C890 624 894 630 894.500 640V683C896 692 902 699 909 701C903 706 901 714 901 723M873 644Q885 647 895 640M873 687Q885 689 894 683" />
      <path d="M1100.500 846V781C1100 770 1104 762 1110 759C1118 762 1124 769 1124 777V844Q1112 850 1100 846M1100 781Q1113 784 1124 777" />
    </g>
    <g fill="#ffd000">
      <circle cx="635" cy="570" r="2.500" /><circle cx="635" cy="706" r="2.500" /><circle cx="845" cy="390" r="2.500" />
      <circle cx="1075" cy="456" r="3" /><circle cx="1086" cy="471" r="3" /><circle cx="1087" cy="514" r="3" />
      <circle cx="1103" cy="537" r="3" /><circle cx="1304" cy="593" r="3" /><circle cx="1315" cy="608" r="3" /><circle cx="1315" cy="674" r="3" />
    </g>
    <g fill="#f00">
      <path d="M915 362h3v3h-3zM915 507h3v3h-3zM929 525h3v3h-3zM691 727h3v3h-3zM802 759h3v3h-3zM1099 846h2v2h-2zM1123 843h2v2h-2z" />
    </g>
  </svg>
);

/* ---------- data ---------- */

const tabs = ["主菜单", "草图", "装配", "三维草图", "直接建模", "Qmodel", "视图"];

const features: [string, React.ReactNode][] = [
  ["抽壳", <ShellBig />], ["筋", <RibBig />], ["拔模", <DraftBig />], ["圆角", <FilletBig />],
  ["倒角", <ChamferBig />], ["圆顶", <DomeBig />], ["孔", <HoleBig />],
];

type Node = {
  name: string; level: number; on: boolean; icon: React.ReactNode;
  sign?: "-" | "+"; last?: boolean; tone?: string; rail?: boolean;
};
const nodes: Node[] = [
  { name: "Part_14", level: 0, on: true, icon: <PartNode />, sign: "-", tone: "root" },
  { name: "坐标系系统", level: 1, on: true, icon: <AxesNode />, sign: "-" },
  { name: "基准坐标系", level: 2, on: true, icon: <AxesNode />, last: true, rail: true },
  { name: "参考平面", level: 1, on: false, icon: <PlaneNode />, sign: "-" },
  { name: "XY 平面", level: 2, on: false, icon: <PlaneNode />, rail: true },
  { name: "YZ 平面", level: 2, on: false, icon: <PlaneNode />, rail: true },
  { name: "XZ 平面", level: 2, on: false, icon: <PlaneNode />, last: true, rail: true },
  { name: "实体", level: 1, on: true, icon: <BodyNode />, sign: "-" },
  { name: "Body1", level: 2, on: true, icon: <AxesNode />, last: true, rail: true },
  { name: "直接建模", level: 1, on: false, icon: <DirectNode />, sign: "+", tone: "muted" },
  { name: "特征建模", level: 1, on: true, icon: <FeatureNode />, sign: "-", tone: "current", last: true },
  { name: "Extrude1", level: 2, on: true, icon: <ExtrudeNode /> },
  { name: "Sketch2", level: 2, on: false, icon: <SketchNode /> },
  { name: "Extrude2", level: 2, on: true, icon: <ExtrudeNode /> },
  { name: "Fillet1", level: 2, on: true, icon: <FilletNode /> },
  { name: "Fillet2", level: 2, on: true, icon: <FilletNode />, last: true, tone: "selected" },
];

const menu = [
  "Edit", "Delete", "As String", "Suppress", "Unsuppress", "ExprSuppress", "Reorder before",
  "Reorder after", "Sketch Out", "Sketch In", "Group", "Cancel Group", "Set Current",
  "Regenerate", "Move to Direct Modeling",
];

const Small = ({ name, icon, off }: { name: string; icon?: React.ReactNode; off?: boolean }) => (
  <SmallButton disabled={off}>{icon}{name}</SmallButton>
);
const Big = ({ name, icon, on, more }: { name: string; icon: React.ReactNode; on?: boolean; more?: boolean }) => (
  <BigButton $on={on}>{icon}{name}{more && <Tri />}</BigButton>
);
const RibbonGroup = ({ name, w, latin, children }: { name: string; w: number; latin?: boolean; children: React.ReactNode }) => (
  <Group $w={w}>
    <GroupBody>{children}</GroupBody>
    <GroupName $latin={latin}>{name}</GroupName>
  </Group>
);

const TreeItem = ({ node, id }: { node: Node; id: string }) => (
  <TreeRow>
    {node.level > 0 && <Indent />}
    {node.level > 1 && <Indent $line={node.rail} />}
    <Branch $v={node.level === 0 ? "none" : node.last ? "half" : "full"}>
      {node.sign && (
        <Expander aria-label={node.sign === "-" ? "收起" : "展开"}>
          <svg width="7" height="7" viewBox="0 0 7 7" aria-hidden="true">
            <path d={node.sign === "-" ? "M1 3.500h5" : "M1 3.500h5M3.500 1v5"} stroke="#2b4fa0" />
          </svg>
        </Expander>
      )}
    </Branch>
    <CheckBox type="checkbox" id={id} defaultChecked={node.on} />
    {node.icon}
    <NodeLabel htmlFor={id} $tone={node.tone}>{node.name}</NodeLabel>
  </TreeRow>
);

export default function App() {
  return (
    <Frame>
      <GlobalStyle />
      <Defs />
      <AppButton aria-label="GCAD"><Logo /></AppButton>

      <TitleBar>
        <QuickBar>
          <IconButton aria-label="新建"><NewFile /></IconButton>
          <IconButton aria-label="打开"><OpenFile /></IconButton>
          <IconButton aria-label="保存"><SaveFile /></IconButton>
          <IconButton aria-label="打印"><PrintFile /></IconButton>
          <IconButton aria-label="撤销"><UndoArrow /></IconButton>
          <IconButton aria-label="恢复"><RedoArrow /></IconButton>
          <IconButton aria-label="更多">
            <svg width="6" height="6" viewBox="0 0 6 6" aria-hidden="true"><path d="M0 .5h6" stroke="#000" /><path d="M0 3h6L3 6z" fill="#000" /></svg>
          </IconButton>
        </QuickBar>
        <WindowTitle>Part_14.gprt - GCAD</WindowTitle>
        <WindowButtons>
          <IconButton aria-label="最小化"><svg width="11" height="11"><path d="M0 5.500h10" stroke="#999" /></svg></IconButton>
          <IconButton aria-label="最大化"><svg width="11" height="11"><path d="M.5 .5h9v9h-9z" fill="none" stroke="#999" /></svg></IconButton>
          <IconButton aria-label="关闭"><svg width="11" height="11"><path d="M0 0l11 11M11 0L0 11" stroke="#999" /></svg></IconButton>
        </WindowButtons>
      </TitleBar>

      <TabRow>
        {tabs.map((t, i) => (
          <RibbonTab key={t} $active={i === 0} $latin={t === "Qmodel"}>{t}</RibbonTab>
        ))}
        <StyleTools>
          <StyleButton>样式<Tri /></StyleButton>
          <IconButton aria-label="帮助"><HelpIcon /></IconButton>
        </StyleTools>
      </TabRow>

      <RibbonBar>
        <RibbonGroup name="选择" w={107}>
          <Big name="选择" icon={<ArrowBig />} on />
          <SelectTools>
            <FindIcon />
            <FilterBox>
              <FilterSelect aria-label="选择过滤"><option>空</option></FilterSelect>
              <FilterArrow><Tri /></FilterArrow>
            </FilterBox>
          </SelectTools>
        </RibbonGroup>
        <RibbonGroup name="剪切板" w={103}>
          <Big name="粘贴" icon={<ClipIcon />} />
          <SmallColumn>
            <Small name="剪切" icon={<CutIcon />} />
            <Small name="复制" icon={<CopyIcon />} />
            <Small name="全选" icon={<SelectAllIcon />} off />
          </SmallColumn>
        </RibbonGroup>
        <RibbonGroup name="草图" w={66}><Big name="二维草图" icon={<SketchBig />} /></RibbonGroup>
        <RibbonGroup name="装配" w={66}><Big name="转至装配" icon={<AssemblyBig />} /></RibbonGroup>
        <RibbonGroup name="参考平面" w={63}><Big name="基准面" icon={<PlaneBig />} more /></RibbonGroup>
        <RibbonGroup name="零件特征" w={462}>
          <Big name="拉伸" icon={<ExtrudeBig />} />
          <SmallColumn>
            <Small name="旋转" icon={<RevolveIcon />} />
            <Small name="扫掠" icon={<SweepIcon />} />
            <Small name="放样" icon={<LoftIcon />} />
          </SmallColumn>
          {features.map(([n, i]) => <Big key={n} name={n} icon={i} />)}
          <SmallColumn>
            <Small name="布尔并" icon={<UniteIcon />} />
            <Small name="布尔差" icon={<SubtractIcon />} />
            <Small name="布尔交" icon={<IntersectIcon />} />
          </SmallColumn>
        </RibbonGroup>
        <RibbonGroup name="阵列" w={223}>
          <Big name="阵列" icon={<ArrayBig />} />
          <Big name="镜像" icon={<MirrorBig />} />
          <Big name="移动/复制" icon={<MoveCopyBig />} />
          <Big name="沿曲线阵列" icon={<CurveArrayBig />} />
        </RibbonGroup>
        <RibbonGroup name="MEP" w={95} latin>
          <Big name="连接点" icon={<ConnectBig />} />
          <Big name="插入点" icon={<InsertBig />} />
        </RibbonGroup>
        <RibbonGroup name="指令" w={61}>
          <SmallColumn>
            <Small name="设置" icon={<SettingsIcon />} />
            <Small name="撤销" icon={<UndoArrow />} off />
            <Small name="恢复" icon={<RedoArrow />} off />
          </SmallColumn>
        </RibbonGroup>
        <RibbonGroup name="工具" w={218}>
          <Big name="表达式管理器" icon={<ClipIcon />} />
          <Big name="三维测量" icon={<RulerBig />} />
          <Big name="表达式抑制" icon={<FxBig />} />
        </RibbonGroup>
        <RibbonGroup name="测试" w={71}>
          <SmallColumn>
            <Small name="开始调试" />
            <Small name="终止调试" off />
          </SmallColumn>
        </RibbonGroup>
        <RibbonGroup name="宏测试" w={139}>
          <SmallColumn>
            <Small name="开始" icon={<PlayIcon />} />
            <Small name="终止" icon={<StopIcon />} off />
            <Small name="运行" icon={<RunIcon />} />
          </SmallColumn>
          <SmallColumn>
            <Small name="添加文件" icon={<AddFileIcon />} />
            <Small name="日志调试" icon={<LogIcon />} />
            <Small name="回放日志" icon={<ReplayIcon />} />
          </SmallColumn>
        </RibbonGroup>
      </RibbonBar>

      <Workspace>
        <Panel>
          <PanelHeader>
            特征视图
            <PanelTools>
              <IconButton aria-label="菜单"><Tri w={9} /></IconButton>
              <IconButton aria-label="固定">
                <svg width="9" height="9" viewBox="0 0 9 9"><path d="M2.500 5V.5h4V5M6 0v5M1 5.500h7M4.500 6v3" fill="none" stroke="#000" /></svg>
              </IconButton>
              <IconButton aria-label="关闭">
                <svg width="9" height="9" viewBox="0 0 9 9"><path d="M1 1l7 7M8 1L1 8" stroke="#000" strokeWidth="1.500" /></svg>
              </IconButton>
            </PanelTools>
          </PanelHeader>
          <PanelToolbar>
            <IconButton aria-label="列表">
              <svg width="16" height="14" viewBox="0 0 16 14" fill="none" stroke="#999"><path d="M.5 .5h13v8h-13z" fill={BG} /><path d="M4.500 6.500h11v7h-11z" fill="#ddd" /><path d="M6 9.500h8M6 11.500h8" /></svg>
            </IconButton>
          </PanelToolbar>
          <Tree>
            {nodes.map((n, i) => <TreeItem key={n.name} node={n} id={`node-${i}`} />)}
          </Tree>
          <ScrollTrack>
            <IconButton aria-label="向左">
              <svg width="7" height="8" viewBox="0 0 7 8"><path d="M6 0L2 4l4 4" fill="none" stroke="#666" strokeWidth="2" /></svg>
            </IconButton>
            <ScrollThumb />
            <IconButton aria-label="向右">
              <svg width="7" height="8" viewBox="0 0 7 8"><path d="M1 0l4 4-4 4" fill="none" stroke="#666" strokeWidth="2" /></svg>
            </IconButton>
          </ScrollTrack>
        </Panel>

        <Document>
          <DocTabs>
            <DocTab>
              <DocTabEdge viewBox="0 0 20 19">
                <path d="M0 19L17 1L20 0V19Z" fill={BG} />
                <path d="M5 19L10 9H20V19Z" fill="#d3e0f2" />
                <path d="M0 18.500L16 2Q17 .5 20 .5" fill="none" stroke={LINE} />
              </DocTabEdge>
              <DocTabFace>
                Part_14.gprt
                <IconButton aria-label="关闭 Part_14.gprt">
                  <svg width="8" height="8" viewBox="0 0 8 8"><path d="M.5 .5l7 7M7.500 .5l-7 7" stroke="#000" strokeWidth="1.500" /></svg>
                </IconButton>
              </DocTabFace>
            </DocTab>
            <DocMenu aria-label="文档列表"><Tri w={9} /></DocMenu>
          </DocTabs>
          <CanvasFrame>
            <Canvas>
              <PartModel />
              <Triad width="56" height="56" viewBox="312 765 56 56" fill="none" aria-hidden="true">
                <path d="M320 797L331 784" stroke="#0f0" strokeWidth="2" />
                <path d="M333 770l5.500 7 5.500-7M338.500 777v7" stroke="#0f0" strokeWidth="2.500" />
                <path d="M320 809L350 817L342 812" stroke="#f00" strokeWidth="2" />
                <path d="M352 804l9 13M361 804l-9 13" stroke="#f00" strokeWidth="2.500" />
              </Triad>
            </Canvas>
          </CanvasFrame>
        </Document>
      </Workspace>

      <StatusBar>
        请选择特征
        <Grip width="9" height="9" viewBox="0 0 9 9"><path d="M7 1h2v2H7zM4 4h2v2H4zM7 4h2v2H7zM1 7h2v2H1zM4 7h2v2H4zM7 7h2v2H7z" fill="#a9a9a9" /></Grip>
      </StatusBar>

      <ContextMenu role="menu">
        {menu.map((m) => (
          <MenuItem key={m} role="menuitem">
            {m}
            {m.startsWith("Reorder") && (
              <svg width="4" height="8" viewBox="0 0 4 8" aria-hidden="true"><path d="M0 0l4 4-4 4z" fill="#000" /></svg>
            )}
          </MenuItem>
        ))}
      </ContextMenu>
      <Pointer width="14" height="21" viewBox="0 0 14 21" aria-hidden="true">
        <path d="M.5 1v16l4-3.500 3 6 2-1-2.500-6h5z" fill="#fff" stroke="#224" />
      </Pointer>
    </Frame>
  );
}
